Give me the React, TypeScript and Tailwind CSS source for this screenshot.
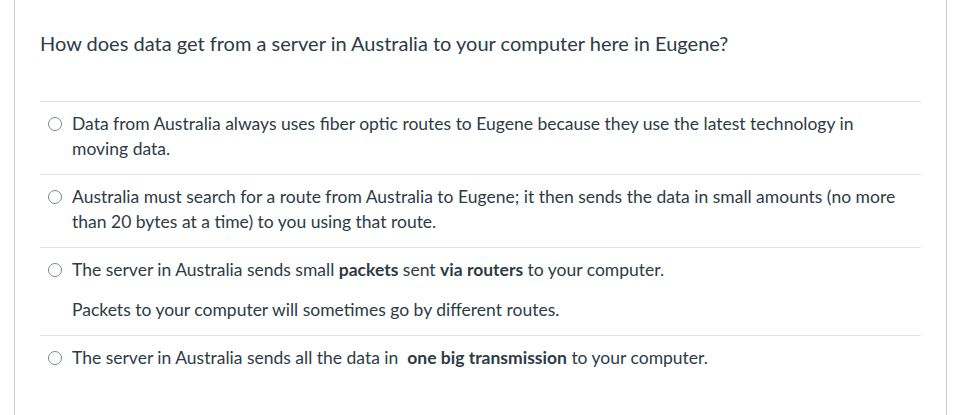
import React from "react";

function Radio() {
  return (
    <span className="mt-[5px] flex h-[14px] w-[14px] shrink-0 items-center justify-center rounded-full border border-[#7b8690] bg-white" />
  );
}

function Answer({ children }: { children: React.ReactNode }) {
  return (
    <div className="flex gap-[10px] border-t border-[#dde2e5] pl-[8px] pt-[10px] pb-[13px]">
      <Radio />
      <div className="flex-1 pr-[20px]">{children}</div>
    </div>
  );
}

export default function App() {
  return (
    <div className="h-[415px] w-full bg-white" style={{ fontFamily: "Lato, 'Open Sans', sans-serif" }}>
      <div className="ml-[14px] h-full w-[933px] border-x border-[#c7cdd1] pl-[25px] pr-[25px] pt-[29px] text-[#2d3b45]">
        <div className="text-[20px] leading-[28px]">
          How does data get from a server in Australia to your computer here in Eugene?
        </div>
        <div className="mt-[44px] text-[17.5px] leading-[24.5px]">
          <Answer>
            Data from Australia always uses fiber optic routes to Eugene because they use the latest technology in moving data.
          </Answer>
          <Answer>
            Australia must search for a route from Australia to Eugene; it then sends the data in small amounts (no more than 20 bytes at a time) to you using that route.
          </Answer>
          <Answer>
            <p>
              The server in Australia sends small <strong className="font-bold">packets</strong> sent <strong className="font-bold">via routers</strong> to your computer.
            </p>
            <p className="mt-[15px]">Packets to your computer will sometimes go by different routes.</p>
          </Answer>
          <Answer>
            The server in Australia sends all the data in&nbsp; <strong className="font-bold">one big transmission</strong> to your computer.
          </Answer>
        </div>
      </div>
    </div>
  );
}
